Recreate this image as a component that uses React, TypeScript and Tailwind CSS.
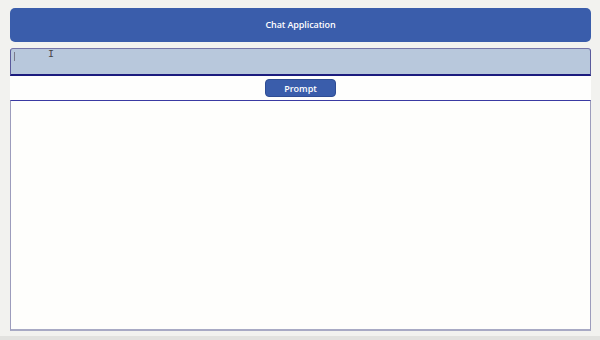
import { useState } from 'react';

export default function App() {
  const [prompt, setPrompt] = useState('');

  return (
    <main
      className="w-[600px] h-[340px] bg-[#f2f2ef] border-b-4 border-[#e2e2df] pl-[10px] pr-[9px] pt-[8px] pb-[5px] flex flex-col overflow-hidden"
      style={{ fontFamily: '"Open Sans", "Noto Sans", sans-serif' }}
    >
      <header className="h-[34px] shrink-0 rounded-[5px] bg-[#3a5dab] flex items-center justify-center">
        <h1 className="text-white text-[9px] font-semibold tracking-[-0.1px]">Chat Application</h1>
      </header>

      <section className="mt-[6px] flex-1 flex flex-col bg-[#fefefd] min-h-0">
        <div className="relative h-[28px] shrink-0 rounded-t-[3px] bg-[#b8c8dc] border border-[#5a5a9c] border-t-[#7474a8] border-b-2 border-b-[#1c1c7e]">
          <input
            value={prompt}
            onChange={(e) => setPrompt(e.target.value)}
            className="w-full h-full bg-transparent outline-none px-[4px] text-[11px] text-[#222]"
          />
          {/* caret + mouse cursor */}
          <span className="absolute left-[3px] top-[3px] w-[1px] h-[9px] bg-[#7a7a8a]" />
          <span className="absolute left-[37px] top-[1px] text-[10px] leading-none text-[#444] font-mono">I</span>
        </div>

        <div className="flex justify-center mt-[3px] shrink-0">
          <button className="w-[71px] h-[18px] rounded-[4px] bg-[#3a5dab] border border-[#2f4d94] text-white text-[9px] font-semibold leading-none">
            Prompt
          </button>
        </div>

        <div className="mt-[3px] flex-1 bg-[#fefefc] border border-t-[#3a3aa2] border-l-[#9c9cbc] border-r-[#9c9cbc] border-b-2 border-b-[#a8aac4]" />
      </section>
    </main>
  );
}
